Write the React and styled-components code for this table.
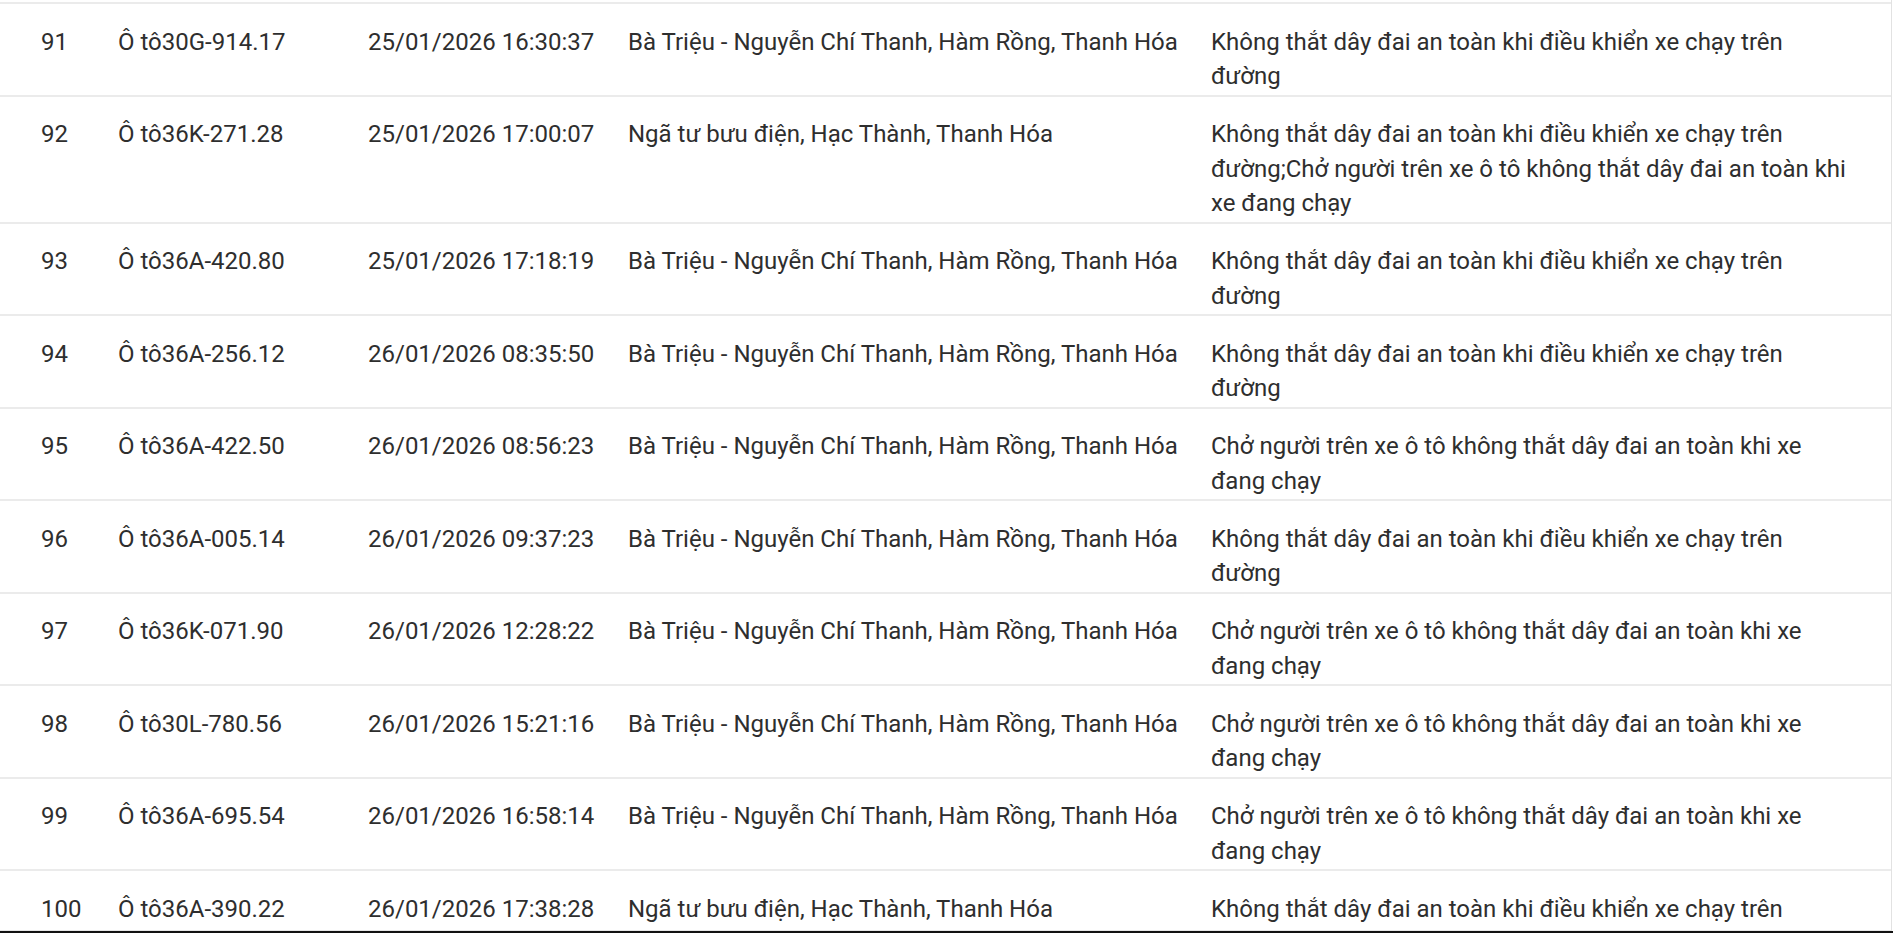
import React from "react";
import styled, { createGlobalStyle } from "styled-components";

const Global = createGlobalStyle`
  html, body { margin: 0; padding: 0; background: #fff; }
  body { font-family: Roboto, "Noto Sans", "Liberation Sans", sans-serif; }
`;

const Screen = styled.div`
  width: 1893px;
  height: 933px;
  display: flex;
  flex-direction: column;
  overflow: hidden;
  background: #fff;
`;

const Viewport = styled.div`
  flex: 1;
  min-height: 0;
  overflow: hidden;
  padding-top: 2px;
  width: 1891px;
  border-right: 1px solid #e2e2e2;
  border-bottom: 1px solid #e6e6e6;
`;

const Table = styled.div`
  display: flex;
  flex-direction: column;
  border-top: 2px solid #ebebeb;
`;

const Row = styled.div`
  display: grid;
  grid-template-columns: 98px 250px 260px 583px 1fr;
  border-bottom: 2px solid #ebebeb;
`;

const Cell = styled.div`
  padding: 20.5px ${(p) => (p.$wide ? "42px" : "20px")} 1px
    ${(p) => (p.$first ? "41px" : "20px")};
  font-size: 24px;
  line-height: 34.5px;
  color: #2e2e2e;
  white-space: ${(p) => (p.$wide ? "normal" : "nowrap")};
`;

const BottomBar = styled.div`
  height: 2px;
  background: #111;
  flex: none;
`;

const BT = "Bà Triệu - Nguyễn Chí Thanh, Hàm Rồng, Thanh Hóa";
const NT = "Ngã tư bưu điện, Hạc Thành, Thanh Hóa";
const K = "Không thắt dây đai an toàn khi điều khiển xe chạy trên đường";
const C = "Chở người trên xe ô tô không thắt dây đai an toàn khi xe đang chạy";

const rows = [
  ["91", "Ô tô30G-914.17", "25/01/2026 16:30:37", BT, K],
  ["92", "Ô tô36K-271.28", "25/01/2026 17:00:07", NT, K + ";" + C],
  ["93", "Ô tô36A-420.80", "25/01/2026 17:18:19", BT, K],
  ["94", "Ô tô36A-256.12", "26/01/2026 08:35:50", BT, K],
  ["95", "Ô tô36A-422.50", "26/01/2026 08:56:23", BT, C],
  ["96", "Ô tô36A-005.14", "26/01/2026 09:37:23", BT, K],
  ["97", "Ô tô36K-071.90", "26/01/2026 12:28:22", BT, C],
  ["98", "Ô tô30L-780.56", "26/01/2026 15:21:16", BT, C],
  ["99", "Ô tô36A-695.54", "26/01/2026 16:58:14", BT, C],
  ["100", "Ô tô36A-390.22", "26/01/2026 17:38:28", NT, K],
];

export default function App() {
  return (
    <>
      <Global />
      <Screen>
        <Viewport>
          <Table>
            {rows.map((r) => (
              <Row key={r[0]}>
                <Cell $first>{r[0]}</Cell>
                <Cell>{r[1]}</Cell>
                <Cell>{r[2]}</Cell>
                <Cell>{r[3]}</Cell>
                <Cell $wide>{r[4]}</Cell>
              </Row>
            ))}
          </Table>
        </Viewport>
        <BottomBar />
      </Screen>
    </>
  );
}
